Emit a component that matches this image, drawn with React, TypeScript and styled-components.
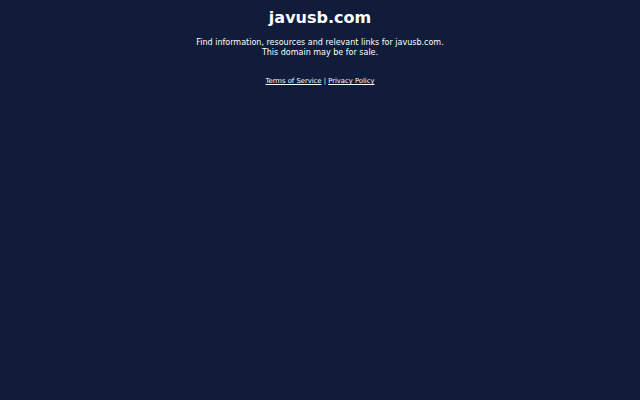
import type { FC } from "react";
import styled, { createGlobalStyle } from "styled-components";

const GlobalStyle = createGlobalStyle`
  html, body {
    margin: 0;
    padding: 0;
    background: #101c3a;
  }
  body {
    font-family: "DejaVu Sans", sans-serif;
  }
`;

const Page = styled.div`
  width: 640px;
  height: 400px;
  background: #101c3a;
  color: #ffffff;
  display: flex;
  flex-direction: column;
  align-items: center;
  padding-top: 8px;
  box-sizing: border-box;
`;

const Title = styled.h1`
  font-size: 16px;
  font-weight: bold;
  margin: 0;
  line-height: 20px;
`;

const Intro = styled.p`
  font-size: 8px;
  line-height: 9.5px;
  margin: 10px 0 0;
  text-align: center;
`;

const Footer = styled.div`
  font-size: 6.8px;
  margin-top: 19px;
  line-height: 10px;
  a {
    color: #ffffff;
    text-decoration: underline;
  }
`;

const App: FC = () => {
  return (
    <>
      <GlobalStyle />
      <Page>
        <Title>javusb.com</Title>
        <Intro>
          Find information, resources and relevant links for javusb.com.
          <br />
          This domain may be for sale.
        </Intro>
        <Footer>
          <a href="#">Terms of Service</a> | <a href="#">Privacy Policy</a>
        </Footer>
      </Page>
    </>
  );
};

export default App;
